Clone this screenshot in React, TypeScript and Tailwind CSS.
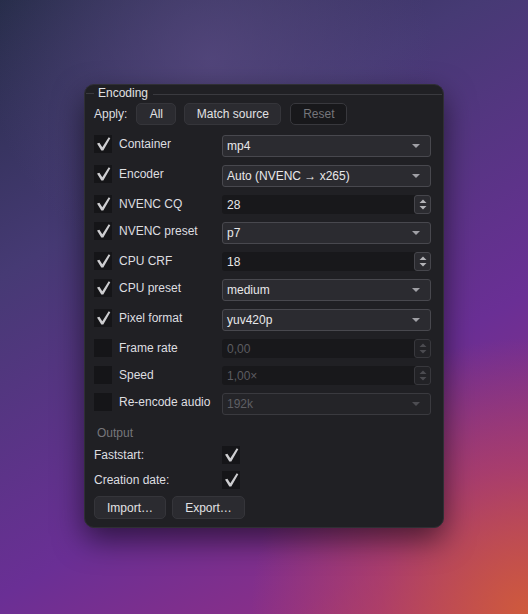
import React from "react";

type Row = {
  label: string;
  checked: boolean;
  kind: "combo" | "spin";
  value: string;
  disabled?: boolean;
};

const rows: Row[] = [
  { label: "Container", checked: true, kind: "combo", value: "mp4" },
  { label: "Encoder", checked: true, kind: "combo", value: "Auto (NVENC \u2192 x265)" },
  { label: "NVENC CQ", checked: true, kind: "spin", value: "28" },
  { label: "NVENC preset", checked: true, kind: "combo", value: "p7" },
  { label: "CPU CRF", checked: true, kind: "spin", value: "18" },
  { label: "CPU preset", checked: true, kind: "combo", value: "medium" },
  { label: "Pixel format", checked: true, kind: "combo", value: "yuv420p" },
  { label: "Frame rate", checked: false, kind: "spin", value: "0,00", disabled: true },
  { label: "Speed", checked: false, kind: "spin", value: "1,00\u00d7", disabled: true },
  { label: "Re-encode audio", checked: false, kind: "combo", value: "192k", disabled: true },
];

function Check({ checked }: { checked: boolean }) {
  return (
    <div className="w-[18px] h-[18px] shrink-0 bg-[#151518] flex items-center justify-center">
      {checked && (
        <svg width="18" height="18" viewBox="0 0 18 18">
          <path
            d="M3 8.6 L5.4 7.7 L8.3 12.3 L14.7 2.3 L16.3 3.2 L9.3 15.6 L7.3 15.6 Z"
            fill="#cdcdd0"
          />
        </svg>
      )}
    </div>
  );
}

function Combo({ value, disabled }: { value: string; disabled?: boolean }) {
  return (
    <div
      className={`h-[22px] rounded-[3px] border flex items-center pl-[4px] pr-[10px] ${
        disabled
          ? "border-[#3a3a3f] bg-[#242428] text-[#5f5f64]"
          : "border-[#48484e] bg-[#2b2b30] text-[#e8e8ea]"
      }`}
    >
      <span className="flex-1 leading-none">{value}</span>
      <svg width="8" height="4" viewBox="0 0 8 4">
        <path d="M0 0 L8 0 L4 4 Z" fill={disabled ? "#4d4d52" : "#a0a0a5"} />
      </svg>
    </div>
  );
}

function Spin({ value, disabled }: { value: string; disabled?: boolean }) {
  const arrow = disabled ? "#4b4b50" : "#b4b4b8";
  return (
    <div className="h-[19px] rounded-[3px] bg-[#18181b] flex items-center">
      <span
        className={`flex-1 pl-[5px] leading-none ${
          disabled ? "text-[#5c5c61]" : "text-[#e8e8ea]"
        }`}
      >
        {value}
      </span>
      <div
        className={`w-[17px] h-[19px] rounded-[3px] border flex items-center justify-center ${
          disabled ? "border-[#38383d] bg-[#222226]" : "border-[#46464c] bg-[#2b2b30]"
        }`}
      >
        <svg width="8" height="11" viewBox="0 0 8 11">
          <path d="M0.5 4 L7.5 4 L4 0.5 Z" fill={arrow} />
          <path d="M0.5 7 L7.5 7 L4 10.5 Z" fill={arrow} />
        </svg>
      </div>
    </div>
  );
}

function Button({
  children,
  width,
  dim,
  tall,
}: {
  children: React.ReactNode;
  width: string;
  dim?: boolean;
  tall?: boolean;
}) {
  return (
    <button
      className={`${width} ${tall ? "h-[23px]" : "h-[22px]"} rounded-[5px] border text-center leading-none ${
        dim
          ? "bg-[#18181b] border-[#38383d] text-[#75757a]"
          : "bg-[#2b2b30] border-[#35353a] text-[#e2e2e4]"
      }`}
    >
      {children}
    </button>
  );
}

export default function App() {
  return (
    <div
      className="w-full h-[614px] overflow-hidden pt-[84px] pl-[84px] bg-[radial-gradient(ellipse_70%_60%_at_100%_100%,#cf5a3c_0%,rgba(190,70,90,0.6)_40%,transparent_75%),radial-gradient(ellipse_60%_50%_at_40%_10%,rgba(90,75,130,0.7)_0%,transparent_70%),linear-gradient(150deg,#272d4a_0%,#463a74_30%,#6a2f95_65%,#8a2f88_85%,#a83a6a_100%)]"
      style={{ fontFamily: '"Liberation Sans", Arial, sans-serif' }}
    >
      <div className="w-[360px] h-[444px] rounded-[10px] bg-[#202024] border border-[#2f2f34] shadow-[0_12px_30px_rgba(0,0,0,0.55)] text-[12px] text-[#dedee0] flex flex-col">
        {/* group title */}
        <div className="h-[16px] flex items-center">
          <div className="ml-[1px] w-[8px] border-t border-[#3a3a3f]" />
          <span className="ml-[4px] leading-none text-[#e0e0e2]">Encoding</span>
          <div className="ml-[5px] mr-[1px] flex-1 border-t border-[#3a3a3f] mt-[3px]" />
        </div>

        {/* apply row */}
        <div className="mt-[2px] ml-[9px] flex items-center gap-[8px]">
          <span className="mr-[1px]">Apply:</span>
          <Button width="w-[40px]">All</Button>
          <Button width="w-[97px]">Match source</Button>
          <div className="ml-[1px]">
            <Button width="w-[57px]" dim>
              Reset
            </Button>
          </div>
        </div>

        {/* form rows */}
        <div className="mt-[10px] ml-[9px] mr-[12px] flex flex-col gap-[8px]">
          {rows.map((r) => (
            <div key={r.label} className="grid grid-cols-[128px_1fr] items-start">
              <div className="flex items-center h-[18px]">
                <Check checked={r.checked} />
                <span className="ml-[7px] leading-none">{r.label}</span>
              </div>
              {r.kind === "combo" ? (
                <Combo value={r.value} disabled={r.disabled} />
              ) : (
                <Spin value={r.value} disabled={r.disabled} />
              )}
            </div>
          ))}
        </div>

        {/* output */}
        <div className="mt-[11px] ml-[12px] h-[14px] leading-[14px] text-[#76767b]">Output</div>
        <div className="mt-[6px] ml-[9px] flex flex-col gap-[7px]">
          <div className="grid grid-cols-[128px_1fr] items-center">
            <span>Faststart:</span>
            <Check checked />
          </div>
          <div className="grid grid-cols-[128px_1fr] items-center">
            <span>Creation date:</span>
            <Check checked />
          </div>
        </div>
        <div className="mt-[7px] ml-[9px] flex gap-[6px]">
          <Button width="w-[72px]" tall>
            {"Import\u2026"}
          </Button>
          <Button width="w-[73px]" tall>
            {"Export\u2026"}
          </Button>
        </div>
      </div>
    </div>
  );
}
